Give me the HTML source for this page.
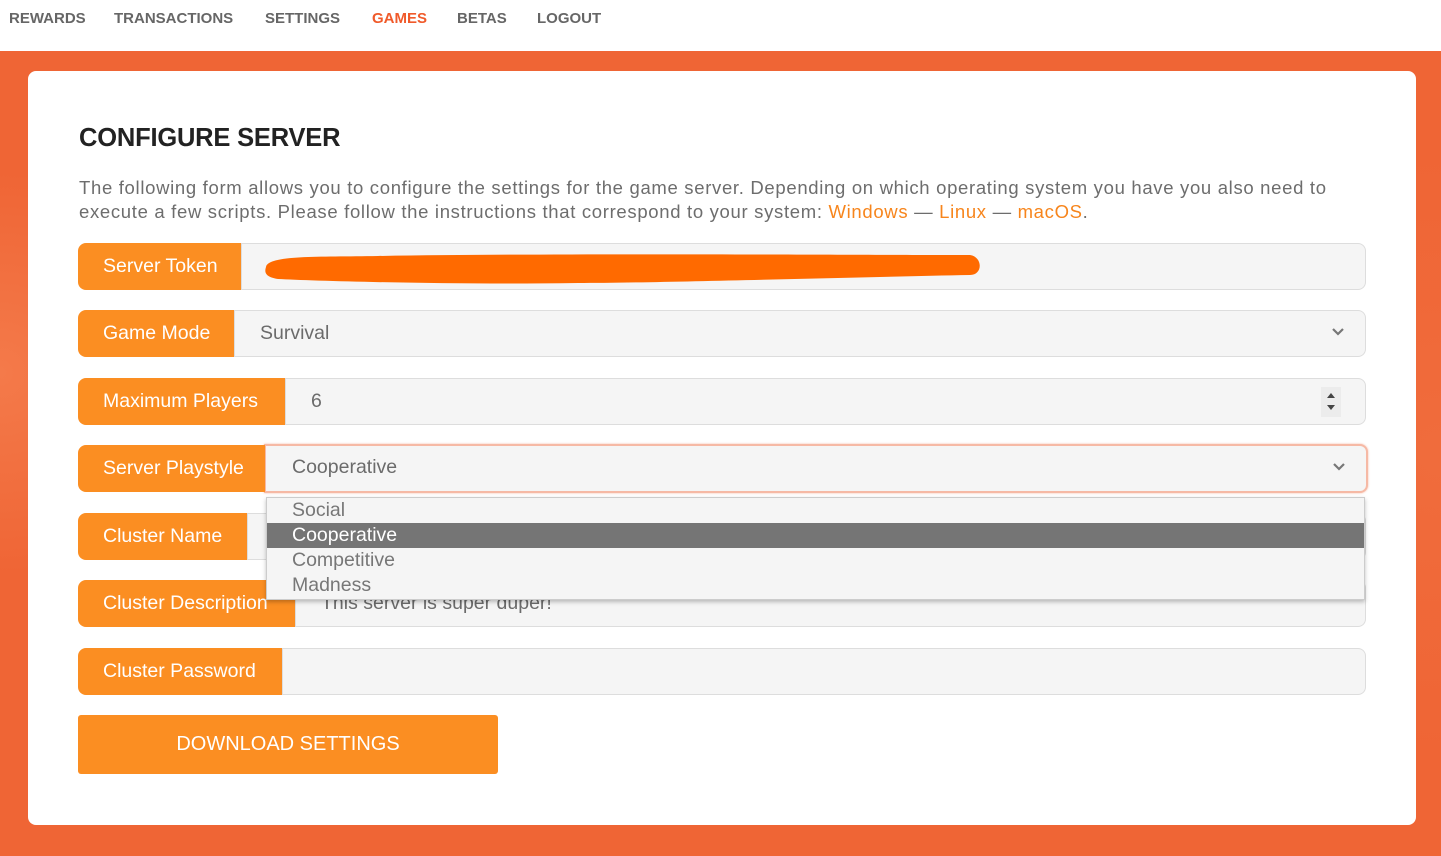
<!DOCTYPE html>
<html><head><meta charset="utf-8">
<style>
*{box-sizing:border-box;margin:0;padding:0}
body{width:1441px;height:856px;overflow:hidden;font-family:"Liberation Sans",Arial,sans-serif;background:#fff;position:relative}
.nav{position:absolute;top:0;left:0;width:1441px;height:51px;background:#fff}
.nav span{position:absolute;top:10px;font-size:15px;font-weight:bold;color:#666}
.bg{position:absolute;top:51px;left:0;width:1441px;height:805px;background:#ef6535;background-image:radial-gradient(circle at 0% 40%,#f47a4a 0,transparent 200px),radial-gradient(circle at 100% 50%,#f06c3c 0,transparent 300px)}
.card{position:absolute;left:28px;top:71px;width:1388px;height:754px;background:#fff;border-radius:8px}
h1{position:absolute;left:79px;top:124px;font-size:25.5px;font-weight:bold;color:#222;letter-spacing:-0.2px}
.p{position:absolute;left:79px;top:176px;width:1300px;font-size:18.5px;line-height:24px;color:#6d6d6d;letter-spacing:0.68px}
.p a{color:#f7851c;text-decoration:none}
.row{position:absolute;left:78px;width:1288px;height:47px}
.lab{position:absolute;left:0;top:0;height:47px;background:#fb8e22;color:#fff;font-size:19.5px;line-height:47px;padding-left:25px;border-radius:8px 0 0 8px;z-index:1}
.inp{position:absolute;top:0;right:0;height:47px;background:#f5f5f5;border:1px solid #ddd;border-radius:0 8px 8px 0;font-size:19.5px;line-height:45px;color:#6b6b6b;padding-left:25px}
.chev{position:absolute;right:20px;top:14px}
.btn{position:absolute;left:78px;top:715px;width:420px;height:59px;background:#fb8e22;color:#fff;font-size:20px;line-height:59px;text-align:center;border-radius:3px}
.dd{position:absolute;left:266px;top:497px;width:1099px;height:103px;background:#f5f5f5;border:1px solid #ccc;box-shadow:0 2px 4px rgba(0,0,0,.25);z-index:3;font-size:19.5px;color:#777}
.dd div{height:25px;line-height:25px;padding-left:25px}
.dd .sel{background:#757575;color:#fff}
</style></head><body>
<div class="nav">
<span style="left:9px">REWARDS</span><span style="left:114px">TRANSACTIONS</span><span style="left:265px">SETTINGS</span><span style="left:372px;color:#f05a2a">GAMES</span><span style="left:457px">BETAS</span><span style="left:537px">LOGOUT</span>
</div>
<div class="bg"></div>
<div class="card"></div>
<h1>CONFIGURE SERVER</h1>
<div class="p">The following form allows you to configure the settings for the game server. Depending on which operating system you have you also need to<br>execute a few scripts. Please follow the instructions that correspond to your system: <a>Windows</a> — <a>Linux</a> — <a>macOS</a>.</div>

<div class="row" style="top:243px"><div class="lab" style="width:163px">Server Token</div><div class="inp" style="left:163px"></div>
<svg style="position:absolute;left:180px;top:4px" width="725" height="40"><path d="M8 20 C10 8 60 10 120 9 C300 6 600 8 712 8 C725 10 725 28 712 28 C600 30 400 36 320 36 C200 38 60 34 20 32 C8 30 6 26 8 20Z" fill="#ff6a00"/></svg></div>

<div class="row" style="top:310px"><div class="lab" style="width:156px">Game Mode</div><div class="inp" style="left:156px">Survival
<svg class="chev" width="14" height="14"><path d="M2 4 L7 9 L12 4" stroke="#777" stroke-width="2.2" fill="none"/></svg></div></div>

<div class="row" style="top:378px"><div class="lab" style="width:207px">Maximum Players</div><div class="inp" style="left:207px">6
<svg style="position:absolute;right:24px;top:8px" width="20" height="30"><rect width="20" height="30" fill="#ececec"/><path d="M6 11 L10 6 L14 11Z M6 18 L10 23 L14 18Z" fill="#444"/></svg></div></div>

<div class="row" style="top:445px"><div class="lab" style="width:187px">Server Playstyle</div><div class="inp" style="left:187px;border:2px solid #f6b9a5;box-shadow:0 0 2px #f6b9a5;border-radius:0 8px 8px 0;padding-left:26px;line-height:43px;left:186px;right:-2px;top:-1px;height:49px">Cooperative
<svg class="chev" width="14" height="14"><path d="M2 4 L7 9 L12 4" stroke="#777" stroke-width="2.2" fill="none"/></svg></div></div>

<div class="row" style="top:513px"><div class="lab" style="width:169px">Cluster Name</div><div class="inp" style="left:169px"></div></div>
<div class="row" style="top:580px"><div class="lab" style="width:217px">Cluster Description</div><div class="inp" style="left:217px">This server is super duper!</div></div>
<div class="row" style="top:648px"><div class="lab" style="width:204px">Cluster Password</div><div class="inp" style="left:204px"></div></div>

<div class="dd"><div>Social</div><div class="sel">Cooperative</div><div>Competitive</div><div>Madness</div></div>
<div class="btn">DOWNLOAD SETTINGS</div>
</body></html>
